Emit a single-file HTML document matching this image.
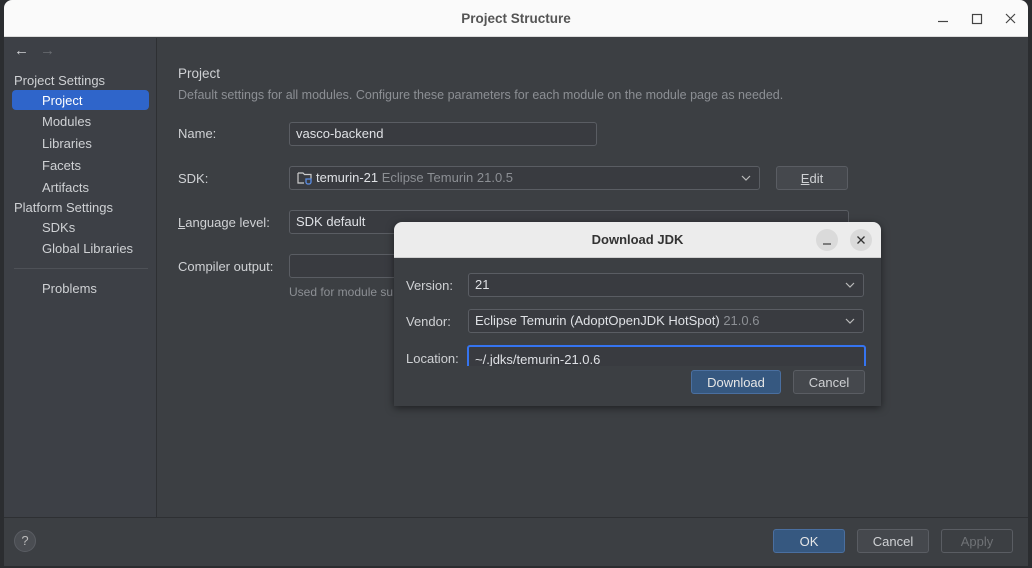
<!DOCTYPE html>
<html><head><style>
*{box-sizing:border-box;margin:0;padding:0}
body{width:1032px;height:568px;background:#2b2d30;font-family:"Liberation Sans",sans-serif;font-size:13px;color:#cfd1d4;position:relative;overflow:hidden}
.a{position:absolute}
.win{left:4px;top:0;width:1024px;height:566px;background:#3c3f43;border-radius:8px 8px 0 0;overflow:hidden}
.tb{left:0;top:0;width:1024px;height:37px;background:#fafafa;border-bottom:1px solid #dcdcdc;text-align:center;line-height:38px;color:#555;font-weight:bold;font-size:13.5px}
.side{left:0;top:38px;width:153px;height:479px;background:#3d4046;border-right:1px solid #2e3033}
.si{position:absolute;left:38px;font-size:13px;color:#cfd1d4}
.sh{position:absolute;left:10px;font-size:13px;color:#cfd1d4}
.lab{position:absolute;color:#cfd1d4}
.fld{position:absolute;border:1px solid #5a5d63;border-radius:3px;background:#393b40;height:24px;line-height:22px;padding-left:6px;color:#dfe1e5}
.btn{position:absolute;border:1px solid #5a5d63;border-radius:3px;background:#45484d;text-align:center;height:24px;line-height:23px;color:#cfd1d4}
.chev{position:absolute;right:8px;top:8px}
.gray{color:#8c8f94}
</style></head><body>
<div class="a win">
 <div class="a tb">Project Structure</div>
 <svg class="a" style="left:930px;top:12px" width="90" height="14"><path d="M4 9.5h10" stroke="#444" stroke-width="1.2"/><rect x="38.5" y="2.5" width="9" height="9" fill="none" stroke="#444" stroke-width="1.2"/><path d="M72 2l9 9M81 2l-9 9" stroke="#444" stroke-width="1.2"/></svg>
 <div class="a side">
  <div class="a" style="left:10px;top:4px;color:#cfd1d4;font-size:15px">←</div>
  <div class="a" style="left:36px;top:4px;color:#6a6d72;font-size:15px">→</div>
  <div class="sh" style="top:35px">Project Settings</div>
  <div class="a" style="left:8px;top:52px;width:137px;height:20px;background:#2f65ca;border-radius:4px"></div>
  <div class="si" style="top:55px;color:#fff">Project</div>
  <div class="si" style="top:76px">Modules</div>
  <div class="si" style="top:98px">Libraries</div>
  <div class="si" style="top:120px">Facets</div>
  <div class="si" style="top:142px">Artifacts</div>
  <div class="sh" style="top:162px">Platform Settings</div>
  <div class="si" style="top:182px">SDKs</div>
  <div class="si" style="top:203px">Global Libraries</div>
  <div class="a" style="left:10px;top:230px;width:134px;height:1px;background:#4e5157"></div>
  <div class="si" style="top:243px">Problems</div>
 </div>
 <div class="lab" style="left:174px;top:66px;font-size:13.5px">Project</div>
 <div class="lab gray" style="left:174px;top:88px;font-size:12.5px">Default settings for all modules. Configure these parameters for each module on the module page as needed.</div>
 <div class="lab" style="left:174px;top:126px">Name:</div>
 <div class="fld" style="left:285px;top:122px;width:308px">vasco-backend</div>
 <div class="lab" style="left:174px;top:171px">SDK:</div>
 <div class="fld" style="left:285px;top:166px;width:471px;padding-left:26px">temurin-21 <span class="gray">Eclipse Temurin 21.0.5</span>
  <svg class="a" style="left:7px;top:4px" width="16" height="14"><path d="M1 2h5l1.5 1.5H14v4M1 2v10h6" fill="none" stroke="#ccc" stroke-width="1.2"/><path d="M9 8h5v3a2 2 0 0 1-2 2h-1a2 2 0 0 1-2-2z" fill="none" stroke="#5b8ee6" stroke-width="1.3"/></svg>
  <svg class="chev" width="10" height="6"><path d="M1 1l4 4 4-4" fill="none" stroke="#bbb" stroke-width="1.2"/></svg></div>
 <div class="btn" style="left:772px;top:166px;width:72px"><u>E</u>dit</div>
 <div class="lab" style="left:174px;top:215px"><u>L</u>anguage level:</div>
 <div class="fld" style="left:285px;top:210px;width:560px">SDK default</div>
 <div class="lab" style="left:174px;top:259px">Compiler output:</div>
 <div class="fld" style="left:285px;top:254px;width:120px"></div>
 <div class="lab gray" style="left:285px;top:285px;font-size:12px">Used for module su</div>
 <div class="a" style="left:0;top:517px;width:1024px;height:1px;background:#2e3033"></div>
 <div class="a" style="left:10px;top:530px;width:22px;height:22px;border-radius:50%;background:#4a4d52;border:1px solid #5a5d63;text-align:center;line-height:20px;color:#bbb">?</div>
 <div class="btn" style="left:769px;top:529px;width:72px;background:#365880;border-color:#4a6fa0;color:#e6e6e6">OK</div>
 <div class="btn" style="left:853px;top:529px;width:72px">Cancel</div>
 <div class="btn" style="left:937px;top:529px;width:72px;background:#3c3f43;color:#6f7276">Apply</div>
</div>
<div class="a" style="left:394px;top:222px;width:487px;height:184px;background:#3c3f43;border-radius:8px 8px 0 0;box-shadow:0 2px 8px rgba(0,0,0,.5);overflow:hidden">
 <div class="a" style="left:0;top:0;width:487px;height:36px;background:#ececec;border-bottom:1px solid #d0d0d0;text-align:center;line-height:36px;color:#333;font-weight:bold;font-size:13px">Download JDK</div>
 <div class="a" style="left:422px;top:7px;width:22px;height:22px;border-radius:50%;background:#dadada"><svg width="22" height="22"><path d="M7 15h8" stroke="#444" stroke-width="1.2"/></svg></div>
 <div class="a" style="left:456px;top:7px;width:22px;height:22px;border-radius:50%;background:#dadada"><svg width="22" height="22"><path d="M7.5 7.5l7 7M14.5 7.5l-7 7" stroke="#333" stroke-width="1.3"/></svg></div>
 <div class="lab" style="left:12px;top:56px">Version:</div>
 <div class="fld" style="left:74px;top:51px;width:396px">21<svg class="chev" width="10" height="6"><path d="M1 1l4 4 4-4" fill="none" stroke="#bbb" stroke-width="1.2"/></svg></div>
 <div class="lab" style="left:12px;top:92px">Vendor:</div>
 <div class="fld" style="left:74px;top:87px;width:396px">Eclipse Temurin (AdoptOpenJDK HotSpot) <span class="gray">21.0.6</span><svg class="chev" width="10" height="6"><path d="M1 1l4 4 4-4" fill="none" stroke="#bbb" stroke-width="1.2"/></svg></div>
 <div class="a" style="left:0;top:122px;width:487px;height:22px;overflow:hidden">
  <div class="lab" style="left:12px;top:7px">Location:</div>
  <div class="fld" style="left:73px;top:1px;width:399px;border:2px solid #3574f0;height:28px;line-height:26px">~/.jdks/temurin-21.0.6</div>
 </div>
 <div class="btn" style="left:297px;top:148px;width:90px;background:#365880;border-color:#4a6fa0;color:#e6e6e6">Download</div>
 <div class="btn" style="left:399px;top:148px;width:72px">Cancel</div>
</div>
</body></html>
